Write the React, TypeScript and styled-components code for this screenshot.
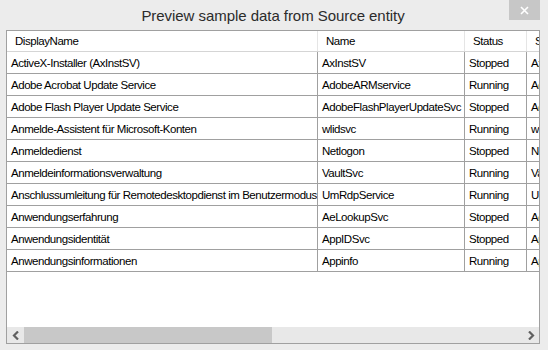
import styled, { createGlobalStyle } from "styled-components";

const GlobalStyle = createGlobalStyle`
  html, body {
    margin: 0;
    padding: 0;
    background: #ececec;
  }
  body {
    font-family: "Liberation Sans", Arial, sans-serif;
  }
`;

const Window = styled.div`
  width: 548px;
  height: 350px;
  box-sizing: border-box;
  background: #ececec;
  display: flex;
  flex-direction: column;
  padding: 0 8px 6px 6px;
  overflow: hidden;
`;

const TitleBar = styled.div`
  height: 30px;
  display: flex;
  align-items: center;
  justify-content: center;
  position: relative;
  font-size: 15px;
  letter-spacing: -0.05px;
  color: #2b2b2b;
`;

const CloseButton = styled.div`
  position: absolute;
  top: 0;
  right: 0;
  width: 31px;
  height: 20px;
  background: #c7c7c7;
  color: #fff;
  display: flex;
  align-items: center;
  justify-content: center;
`;

const Grid = styled.div`
  flex: 1;
  min-width: 0;
  border: 1px solid #a0a0a0;
  background: #fff;
  display: flex;
  flex-direction: column;
  overflow: hidden;
`;

const Viewport = styled.div`
  flex: 1;
  min-width: 0;
  overflow: hidden;
`;

const Table = styled.div`
  display: flex;
  flex-direction: column;
  width: 620px;
  font-size: 11.5px;
  letter-spacing: -0.45px;
  color: #000;
`;

const Row = styled.div<{ $header?: boolean }>`
  display: flex;
  height: ${(p) => (p.$header ? 20 : 21)}px;
  border-bottom: 1px solid ${(p) => (p.$header ? "#d5d5d5" : "#a0a0a0")};
`;

const Cell = styled.div<{ $w: number; $header?: boolean }>`
  width: ${(p) => p.$w}px;
  flex: none;
  box-sizing: border-box;
  padding-left: ${(p) => (p.$header ? 8 : 4)}px;
  display: flex;
  align-items: center;
  white-space: nowrap;
  overflow: hidden;
  border-right: 1px solid ${(p) => (p.$header ? "#e5e5e5" : "#a0a0a0")};
`;

const ScrollBar = styled.div`
  height: 16px;
  display: flex;
  background: #e8e8e8;
  flex: none;
`;

const ArrowButton = styled.div`
  width: 17px;
  display: flex;
  align-items: center;
  justify-content: center;
  flex: none;
`;

const Thumb = styled.div`
  width: 248px;
  background: #c8c8c8;
  flex: none;
`;

const Track = styled.div`
  flex: 1;
`;

const columns = [311, 147, 62, 100];
const headers = ["DisplayName", "Name", "Status", "ServiceType"];

const rows: string[][] = [
  ["ActiveX-Installer (AxInstSV)", "AxInstSV", "Stopped", "AxInstSV"],
  ["Adobe Acrobat Update Service", "AdobeARMservice", "Running", "AdobeARM"],
  ["Adobe Flash Player Update Service", "AdobeFlashPlayerUpdateSvc", "Stopped", "AdobeFlash"],
  ["Anmelde-Assistent für Microsoft-Konten", "wlidsvc", "Running", "wlidsvc"],
  ["Anmeldedienst", "Netlogon", "Stopped", "Netlogon"],
  ["Anmeldeinformationsverwaltung", "VaultSvc", "Running", "VaultSvc"],
  ["Anschlussumleitung für Remotedesktopdienst im Benutzermodus", "UmRdpService", "Running", "UmRdp"],
  ["Anwendungserfahrung", "AeLookupSvc", "Stopped", "AeLookup"],
  ["Anwendungsidentität", "AppIDSvc", "Stopped", "AppIDSvc"],
  ["Anwendungsinformationen", "Appinfo", "Running", "Appinfo"],
];

const Chevron = ({ left }: { left?: boolean }) => (
  <svg width="8" height="9" viewBox="0 0 8 9">
    <path
      d={left ? "M6 0.5 L2 4.5 L6 8.5" : "M2 0.5 L6 4.5 L2 8.5"}
      fill="none"
      stroke="#606060"
      strokeWidth="2.2"
    />
  </svg>
);

export default function App() {
  return (
    <>
      <GlobalStyle />
      <Window>
        <TitleBar>
          Preview sample data from Source entity
          <CloseButton>
            <svg width="9" height="9" viewBox="0 0 9 9">
              <path d="M1 1 L8 8 M8 1 L1 8" stroke="#fff" strokeWidth="1.6" />
            </svg>
          </CloseButton>
        </TitleBar>
        <Grid>
          <Viewport>
            <Table>
              <Row $header>
                {headers.map((h, i) => (
                  <Cell key={h} $w={columns[i]} $header>
                    {h}
                  </Cell>
                ))}
              </Row>
              {rows.map((r) => (
                <Row key={r[1]}>
                  {r.map((c, i) => (
                    <Cell key={i} $w={columns[i]}>
                      {c}
                    </Cell>
                  ))}
                </Row>
              ))}
            </Table>
          </Viewport>
          <ScrollBar>
            <ArrowButton>
              <Chevron left />
            </ArrowButton>
            <Thumb />
            <Track />
            <ArrowButton>
              <Chevron />
            </ArrowButton>
          </ScrollBar>
        </Grid>
      </Window>
    </>
  );
}
